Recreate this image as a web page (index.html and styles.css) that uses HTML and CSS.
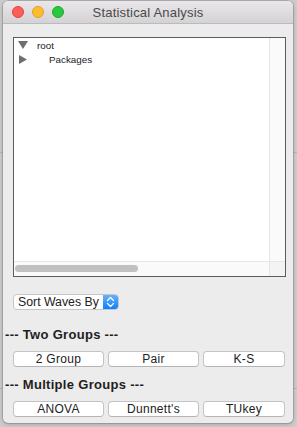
FILE: index.html
```html
<!DOCTYPE html>
<html>
<head>
<meta charset="utf-8">
<link rel="stylesheet" href="styles.css">
</head>
<body>
<div class="window">
  <div class="titlebar">
    <div class="lights">
      <span class="light red"></span>
      <span class="light yellow"></span>
      <span class="light green"></span>
    </div>
    <div class="title">Statistical Analysis</div>
    <div></div>
  </div>
  <div class="content">
    <div class="listbox">
      <div class="tree">
        <div class="row">
          <svg class="tri" width="10" height="9" viewBox="0 0 10 9"><polygon points="0,0 10,0 5,8" fill="#6e6e6e"/></svg>
          <span class="label root">root</span>
        </div>
        <div class="row">
          <svg class="tri" width="10" height="9" viewBox="0 0 10 9"><polygon points="1,0 9,4.5 1,9" fill="#6e6e6e"/></svg>
          <span class="label pkg">Packages</span>
        </div>
      </div>
      <div class="vscroll"></div>
      <div class="hscroll"><div class="thumb"></div></div>
      <div class="corner"></div>
    </div>
    <div class="popup">
      <span class="popup-text">Sort Waves By</span>
      <span class="stepper">
        <svg width="9" height="12" viewBox="0 0 9 12"><path d="M1.5 4.5 L4.5 1.5 L7.5 4.5 M1.5 7.5 L4.5 10.5 L7.5 7.5" fill="none" stroke="#fff" stroke-width="1.3" stroke-linecap="round" stroke-linejoin="round"/></svg>
      </span>
    </div>
    <div class="section">--- Two Groups ---</div>
    <div class="buttons">
      <button class="btn">2 Group</button>
      <button class="btn">Pair</button>
      <button class="btn">K-S</button>
    </div>
    <div class="section second">--- Multiple Groups ---</div>
    <div class="buttons">
      <button class="btn">ANOVA</button>
      <button class="btn">Dunnett's</button>
      <button class="btn">TUkey</button>
    </div>
  </div>
</div>
</body>
</html>
```

FILE: styles.css
```css
html, body {
  margin: 0;
  padding: 0;
}
body {
  width: 297px;
  height: 427px;
  overflow: hidden;
  background:
    linear-gradient(#b9b9b9, #b9b9b9) 0 152px / 100% 1px no-repeat,
    linear-gradient(#b9b9b9, #b9b9b9) 0 388px / 100% 1px no-repeat,
    #cdcdcd;
  font-family: "Liberation Sans", Arial, sans-serif;
}
.window {
  margin: 1px 0 0 3px;
  width: 290px;
  height: 422px;
  background: #ececec;
  border-radius: 5px;
  overflow: hidden;
  box-shadow: 0 0 0 0.5px rgba(0,0,0,0.25), 0 1px 4px rgba(0,0,0,0.25);
  display: flex;
  flex-direction: column;
}
.titlebar {
  height: 22px;
  flex: none;
  border-bottom: 1px solid #bcbabc;
  background: linear-gradient(#e9e7e9, #d4d2d4);
  display: grid;
  grid-template-columns: 1fr auto 1fr;
  align-items: center;
}
.lights {
  display: flex;
  gap: 8px;
  padding-left: 9px;
}
.light {
  width: 12px;
  height: 12px;
  border-radius: 50%;
  box-sizing: border-box;
}
.red { background: #fc5f57; border: 0.5px solid #e0443e; }
.yellow { background: #fdbc2e; border: 0.5px solid #dea123; }
.green { background: #28c840; border: 0.5px solid #1aab29; }
.title {
  font-size: 13px;
  color: #4a4a4a;
  letter-spacing: 0.2px;
}
.content {
  padding: 13px 7px 0 10px;
}
.listbox {
  height: 238px;
  border: 1px solid #5c5c5c;
  background: #fff;
  display: grid;
  grid-template-columns: 1fr 16px;
  grid-template-rows: 1fr 15px;
}
.tree {
  padding: 0 0 0 4px;
}
.row {
  display: flex;
  align-items: center;
  height: 14.5px;
}
.tri {
  flex: none;
}
.label {
  font-size: 9.8px;
  color: #222;
}
.root { margin-left: 9px; }
.pkg { margin-left: 21px; }
.vscroll {
  background: #fafafa;
  border-left: 1px solid #e6e6e6;
}
.hscroll {
  background: #fafafa;
  border-top: 1px solid #e6e6e6;
  padding: 3px 0 0 1px;
}
.thumb {
  width: 123px;
  height: 7px;
  border-radius: 4px;
  background: #c1c1c1;
}
.corner {
  background: #f3f3f3;
  border-top: 1px solid #e6e6e6;
  border-left: 1px solid #e6e6e6;
}
.popup {
  margin-top: 17px;
  width: 106px;
  height: 16px;
  box-sizing: border-box;
  border: 1px solid #c6c6c6;
  border-radius: 4px;
  background: #fff;
  display: flex;
  align-items: center;
  overflow: hidden;
}
.popup-text {
  flex: 1;
  font-size: 12.3px;
  color: #222;
  padding-left: 4px;
}
.stepper {
  width: 15px;
  height: 100%;
  background: linear-gradient(#69b1fa, #0d7ffd);
  display: flex;
  align-items: center;
  justify-content: center;
}
.section {
  margin: 17px 0 0 -8px;
  height: 16px;
  line-height: 16px;
  font-size: 13px;
  font-weight: bold;
  color: #1e1e1e;
  letter-spacing: 0.3px;
}
.section.second {
  margin-top: 10px;
}
.buttons {
  margin-top: 8px;
  display: grid;
  grid-template-columns: 91px 91px 82px;
  column-gap: 4px;
}
.btn {
  height: 16px;
  padding: 0;
  margin: 0;
  border: 1px solid #c4c4c4;
  border-bottom-color: #b4b4b4;
  border-radius: 4px;
  background: #fff;
  font-family: "Liberation Sans", Arial, sans-serif;
  font-size: 12px;
  letter-spacing: 0.3px;
  color: #222;
  line-height: 14px;
}
```
